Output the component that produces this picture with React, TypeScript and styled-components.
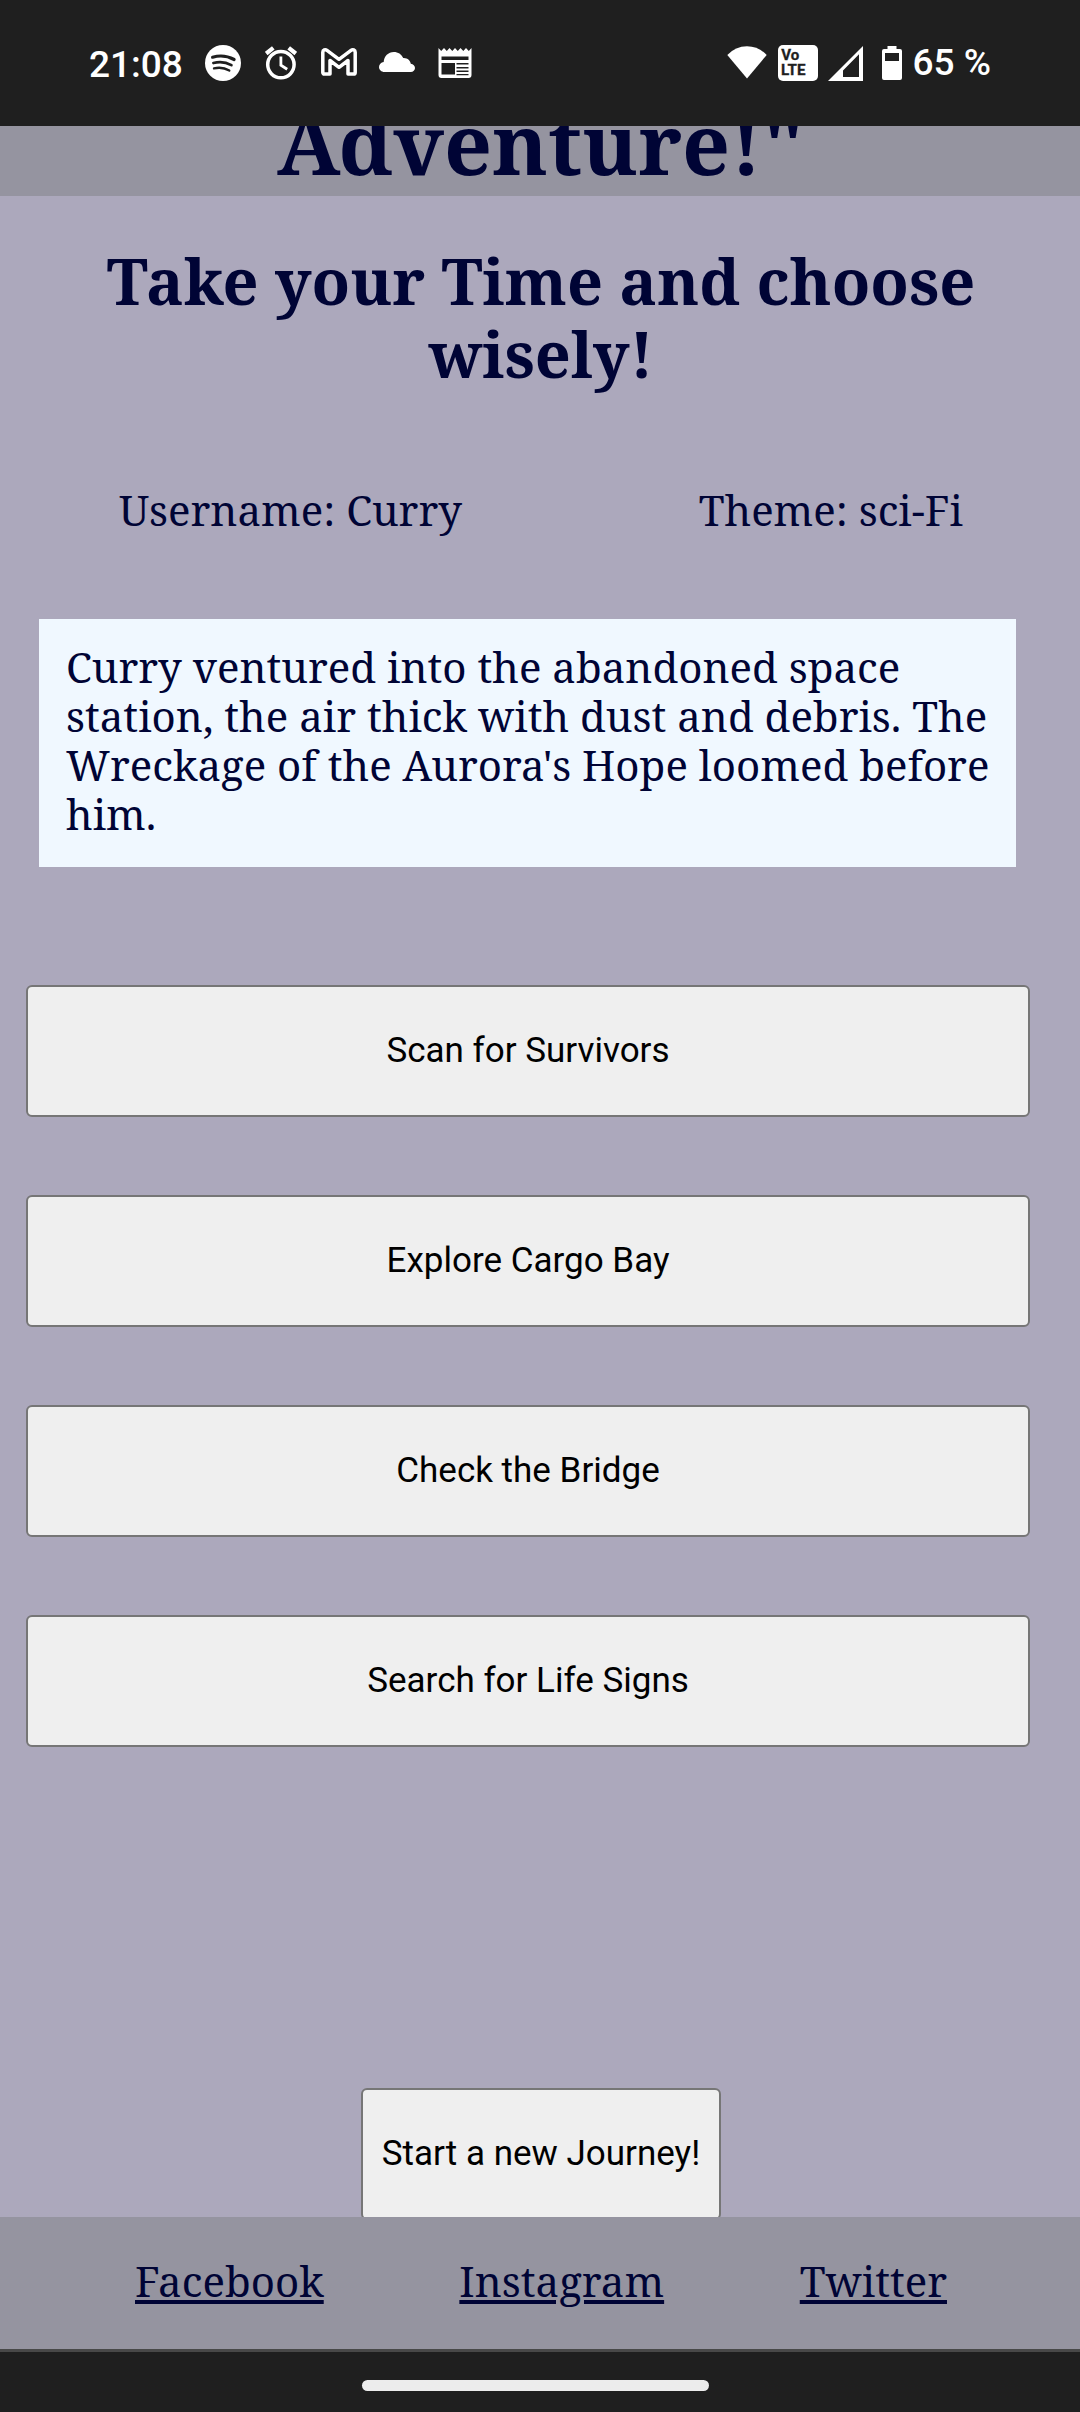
import React from "react";
import styled, { createGlobalStyle } from "styled-components";

const serif = `"Noto Serif", "DejaVu Serif Condensed", "DejaVu Serif", serif`;
const ink = "#000435";

const GlobalStyle = createGlobalStyle`
  html, body { margin: 0; padding: 0; }
  body { background: #aca8bc; color: ${ink}; font-family: ${serif}; }
  *, *::before, *::after { box-sizing: border-box; }
`;

const Screen = styled.div`
  display: flex;
  flex-direction: column;
  width: 1080px;
  height: 2412px;
  overflow: hidden;
  background: #aca8bc;
`;

const StatusBar = styled.div`
  display: flex;
  flex: none;
  justify-content: space-between;
  height: 126px;
  padding: 45px 89px 0 89px;
  background: #1f1f1f;
  color: #fff;
  font-family: Roboto, sans-serif;
`;

const StatusGroup = styled.div`
  display: flex;
  align-items: flex-start;
  height: 36px;
`;

const Clock = styled.span`
  width: 94px;
  margin-top: 2px;
  font-size: 37px;
  font-weight: 500;
  line-height: 36px;
  white-space: nowrap;
`;

const BatteryLevel = styled.span`
  margin-left: 11px;
  font-size: 37px;
  font-weight: 500;
  line-height: 36px;
  white-space: nowrap;
`;

const Glyph = styled.svg<{ $left: number }>`
  display: block;
  flex: none;
  margin-left: ${(p) => p.$left}px;
`;

const Header = styled.header`
  display: flex;
  flex: none;
  flex-direction: column;
  align-items: center;
  justify-content: flex-end;
  height: 70px;
  padding: 0 0 4px 2px;
  overflow: hidden;
  background: #9594a0;
`;

const Title = styled.h1`
  margin: 0;
  font-size: 84px;
  line-height: 98px;
  white-space: nowrap;
`;

const Main = styled.main`
  display: flex;
  flex: none;
  flex-direction: column;
  height: 2021px;
`;

const Subtitle = styled.h2`
  margin: 48px 0 0;
  padding: 0 60px 0 62px;
  font-size: 63px;
  line-height: 73px;
  text-align: center;
`;

const Details = styled.div`
  display: flex;
  justify-content: space-between;
  margin-top: 95px;
  padding: 0 117px 0 119px;
  font-size: 42px;
  line-height: 49px;
`;

const Story = styled.p`
  width: 977px;
  height: 248px;
  margin: 85px 0 0 39px;
  padding: 23px 20px 0 27px;
  background: #f0f8ff;
  font-size: 42px;
  line-height: 49px;
`;

const Choices = styled.div`
  display: flex;
  flex-direction: column;
  gap: 78px;
  width: 1004px;
  margin: 118px 0 0 26px;
`;

const Button = styled.button<{ $width?: number }>`
  flex: none;
  width: ${(p) => (p.$width ? `${p.$width}px` : "100%")};
  height: 132px;
  padding: 0 0 2px;
  border: 2px solid #767676;
  border-radius: 6px;
  background: #efefef;
  color: #000;
  font: 400 35px/41px Roboto, sans-serif;
  white-space: nowrap;
`;

const Restart = styled.div`
  display: flex;
  flex: none;
  height: 129px;
  margin: 341px 0 0 361px;
  overflow: hidden;
`;

const Footer = styled.footer`
  display: flex;
  flex: none;
  justify-content: space-between;
  height: 132px;
  padding: 39px 133px 0 135px;
  background: #9594a0;
  font-size: 42px;
  line-height: 49px;
`;

const FooterLink = styled.a`
  color: ${ink};
  text-decoration: underline;
  text-decoration-thickness: 4px;
  text-underline-offset: 3px;
`;

const NavBar = styled.div`
  flex: none;
  height: 63px;
  padding: 28px 0 0 362px;
  border-top: 3px solid #484848;
  background: #1f1f1f;
`;

const NavPill = styled.div`
  width: 347px;
  height: 11px;
  border-radius: 6px;
  background: #ececec;
`;

const SpotifyIcon = () => (
  <Glyph $left={22} width="36" height="36" viewBox="0 0 36 36">
    <circle cx="18" cy="18" r="18" fill="#fff" />
    <g fill="none" stroke="#1f1f1f" strokeLinecap="round">
      <path d="M7.600 12.200c7-2 15-1.300 21.500 2.300" strokeWidth="3.200" />
      <path d="M8.400 18c6-1.700 12.500-1 18 2.200" strokeWidth="2.700" />
      <path d="M9 23.400c5.200-1.300 10.500-.7 15.300 2.200" strokeWidth="2.300" />
    </g>
  </Glyph>
);

const AlarmIcon = () => (
  <Glyph $left={24} width="32" height="36" viewBox="0 0 32 36" fill="none" stroke="#fff">
    <circle cx="15.900" cy="19.600" r="13.200" strokeWidth="3.500" />
    <path d="M15.900 11.500v8.800l6.300 4" strokeWidth="2.800" />
    <path d="M1.200 8.500 8.300 2.800M30.800 8.500 23.700 2.800" strokeWidth="4.200" />
  </Glyph>
);

const MailIcon = () => (
  <Glyph $left={24} width="36" height="36" viewBox="0 0 36 36">
    <path
      d="M1.800 7.200C1.800 4.900 4.200 4 6 5.300L18 14.300 30 5.300c1.800-1.300 4.200-.4 4.200 1.900V27.500c0 1-.7 1.600-1.600 1.600H27V15.500L18 22.300 9 15.500v13.600H3.400c-.9 0-1.600-.6-1.600-1.600Z"
      fill="none"
      stroke="#fff"
      strokeWidth="3.500"
      strokeLinejoin="round"
    />
  </Glyph>
);

const CloudIcon = () => (
  <Glyph $left={22} width="36" height="36" viewBox="0 0 36 36">
    <path
      d="M5.500 27C2.400 27 0 24.800 0 22c0-2.600 2-4.700 4.700-5C5 11.300 9.300 7 14.800 7c4.300 0 7.700 2.300 9.400 6 4.300-.3 7.300 2.600 7.600 5.800 2.500.3 4.200 2 4.200 4.200 0 2.300-1.800 4-4.200 4Z"
      fill="#fff"
    />
  </Glyph>
);

const NewsIcon = () => (
  <Glyph $left={23} width="34" height="36" viewBox="0 0 34 36">
    <path
      fillRule="evenodd"
      d="M.5 3 3.200 6 6 3l2.800 3 2.700-3 2.800 3L17 3l2.800 3 2.700-3 2.800 3L28 3l2.800 3 2.700-3v27a3 3 0 0 1-3 3h-27a3 3 0 0 1-3-3ZM3.500 11.500V15h27v-3.500ZM3.500 18v11.500H17V18ZM18.500 18v1.500h12V18Zm0 4v1.500h12V22Zm0 3.500V27h12v-1.500Zm0 3.500v1.200h12V29Z"
      fill="#fff"
    />
  </Glyph>
);

const WifiIcon = () => (
  <Glyph $left={0} width="40" height="36" viewBox="0 0 40 36">
    <path d="M.3 10Q8.500 1.200 20 1.200T39.700 10L20 33.500Z" fill="#fff" />
  </Glyph>
);

const VolteIcon = () => (
  <Glyph $left={11} width="40" height="36" viewBox="0 0 40 36">
    <rect width="40" height="36" rx="5" fill="#fff" />
    <g
      fill="#1f1f1f"
      stroke="#1f1f1f"
      strokeWidth=".3"
      fontFamily="Roboto, sans-serif"
      fontSize="14.800"
      fontWeight="700"
    >
      <text x="3.200" y="15.400" textLength="18" lengthAdjust="spacingAndGlyphs">Vo</text>
      <text x="3" y="30.400" textLength="24.500" lengthAdjust="spacingAndGlyphs">LTE</text>
    </g>
  </Glyph>
);

const SignalIcon = () => (
  <Glyph $left={10} width="35" height="36" viewBox="0 0 35 36">
    <path fillRule="evenodd" d="M0 36 35 1v35ZM15 25.500V32h16V9.200Z" fill="#fff" />
  </Glyph>
);

const BatteryIcon = () => (
  <Glyph $left={19} width="20" height="36" viewBox="0 0 20 36">
    <path
      fillRule="evenodd"
      d="M5.500 1h9v3H18a2 2 0 0 1 2 2v27a2 2 0 0 1-2 2H2a2 2 0 0 1-2-2V6a2 2 0 0 1 2-2h3.500ZM3 8v8h14V8Z"
      fill="#fff"
    />
  </Glyph>
);

const choices = ["Scan for Survivors", "Explore Cargo Bay", "Check the Bridge", "Search for Life Signs"];

const links = ["Facebook", "Instagram", "Twitter"];

export default function App() {
  return (
    <>
      <GlobalStyle />
      <Screen>
        <StatusBar>
          <StatusGroup>
            <Clock>21:08</Clock>
            <SpotifyIcon />
            <AlarmIcon />
            <MailIcon />
            <CloudIcon />
            <NewsIcon />
          </StatusGroup>
          <StatusGroup>
            <WifiIcon />
            <VolteIcon />
            <SignalIcon />
            <BatteryIcon />
            <BatteryLevel>65 %</BatteryLevel>
          </StatusGroup>
        </StatusBar>
        <Header>
          <Title>Adventure!"</Title>
        </Header>
        <Main>
          <Subtitle>Take your Time and choose wisely!</Subtitle>
          <Details>
            <span>Username: Curry</span>
            <span>Theme: sci-Fi</span>
          </Details>
          <Story>
            Curry ventured into the abandoned space station, the air thick with dust and debris. The
            Wreckage of the Aurora's Hope loomed before him.
          </Story>
          <Choices>
            {choices.map((c) => (
              <Button key={c}>{c}</Button>
            ))}
          </Choices>
          <Restart>
            <Button $width={360}>Start a new Journey!</Button>
          </Restart>
        </Main>
        <Footer>
          {links.map((l) => (
            <FooterLink key={l} href="#">{l}</FooterLink>
          ))}
        </Footer>
        <NavBar>
          <NavPill />
        </NavBar>
      </Screen>
    </>
  );
}
